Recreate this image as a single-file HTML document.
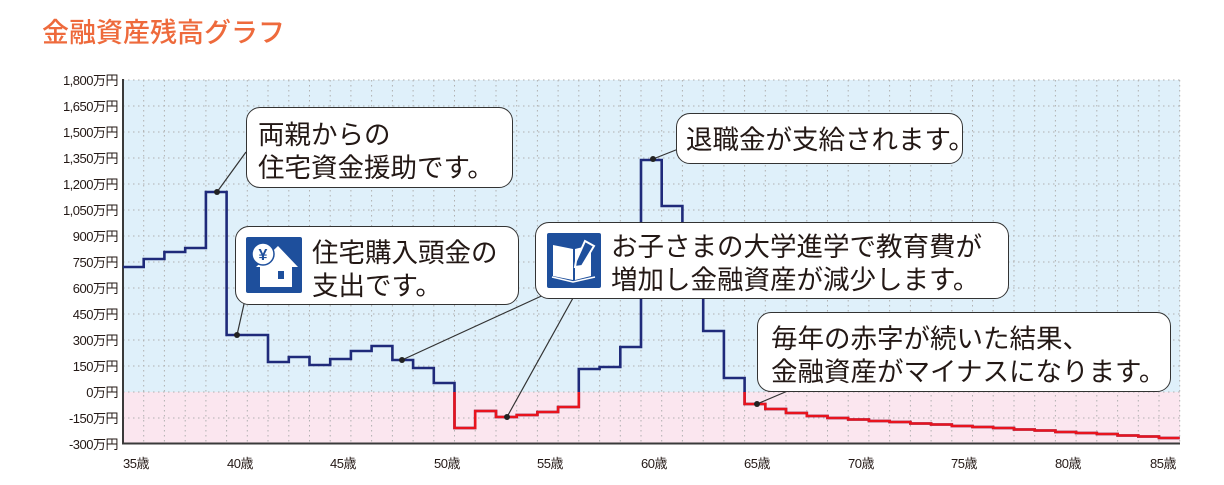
<!DOCTYPE html>
<html><head><meta charset="utf-8">
<style>
body{margin:0;width:1224px;height:485px;background:#fff;position:relative;overflow:hidden;font-family:"Liberation Sans","Noto Sans CJK JP",sans-serif;}
.t{position:absolute;left:42px;top:11px;font-size:27px;font-weight:500;color:#ee6a3c;font-family:"Noto Sans CJK JP",sans-serif;}
.b{position:absolute;background:#fff;border:1.5px solid #333;border-radius:14px;box-sizing:border-box;font-family:"Noto Sans CJK JP",sans-serif;font-size:26.5px;line-height:33px;color:#231815;white-space:nowrap;}
svg{position:absolute;left:0;top:0}
</style></head><body>
<div class="t">金融資産残高グラフ</div>
<svg width="1224" height="485" viewBox="0 0 1224 485">
<defs><clipPath id="neg"><rect x="0" y="392" width="1224" height="100"/></clipPath>
<path id="p" d="M123,267 H143.7 V259 H164.4 V252 H185.2 V248 H205.9 V192 H226.6 V335 H268 V362 H288.8 V357 H309.5 V365 H330.2 V359 H350.9 V351 H371.6 V346 H392.4 V360 H413.1 V368 H433.8 V383 H454.5 V428 H475.2 V411 H496 V417 H516.7 V415 H537.4 V412 H558.1 V407 H578.8 V369 H599.6 V367 H620.3 V347 H641 V160 H661.7 V206 H682.4 V260 H703.2 V331 H723.9 V378 H744.6 V404 H765.3 V409 H786 V413 H806.8 V416 H827.5 V418 H848.2 V419.5 H868.9 V421 H889.6 V422 H910.4 V423.5 H931.1 V424.5 H951.8 V426 H972.5 V427 H993.2 V428 H1014 V429.5 H1034.7 V430.5 H1055.4 V432 H1076.1 V433 H1096.8 V434 H1117.6 V435.5 H1138.3 V436.5 H1159 V438 H1179.7" fill="none" stroke-width="2.6"/>
</defs>
<rect x="123" y="80" width="1057" height="312" fill="#dff0fa"/>
<rect x="123" y="392" width="1057" height="51" fill="#fbe6ef"/>
<g stroke="#b0b0b0" stroke-width="1" stroke-dasharray="1.5 3.5">
<path d="M123 80H1180M123 106H1180M123 132H1180M123 158H1180M123 184H1180M123 210H1180M123 236H1180M123 262H1180M123 288H1180M123 314H1180M123 340H1180M123 366H1180M123 392H1180M123 418H1180"/>
<path d="M143.7 80V443M164.4 80V443M185.2 80V443M205.9 80V443M226.6 80V443M247.3 80V443M268 80V443M288.8 80V443M309.5 80V443M330.2 80V443M350.9 80V443M371.6 80V443M392.4 80V443M413.1 80V443M433.8 80V443M454.5 80V443M475.2 80V443M496 80V443M516.7 80V443M537.4 80V443M558.1 80V443M578.8 80V443M599.6 80V443M620.3 80V443M641 80V443M661.7 80V443M682.4 80V443M703.2 80V443M723.9 80V443M744.6 80V443M765.3 80V443M786 80V443M806.8 80V443M827.5 80V443M848.2 80V443M868.9 80V443M889.6 80V443M910.4 80V443M931.1 80V443M951.8 80V443M972.5 80V443M993.2 80V443M1014 80V443M1034.7 80V443M1055.4 80V443M1076.1 80V443M1096.8 80V443M1117.6 80V443M1138.3 80V443M1159 80V443M1179.7 80V443"/>
</g>
<path d="M123 79V443.5H1180" fill="none" stroke="#3a3a3a" stroke-width="2"/>
<use href="#p" stroke="#1f2a7a"/>
<g clip-path="url(#neg)"><use href="#p" stroke="#e8141e"/></g>
<g stroke="#333" stroke-width="1.2">
<path d="M217 192L246 152M237 335L244 304M402 360L548 293M507 417L573 298M653 159L686 146M757 404L790 390"/>
</g>
<g fill="#222"><circle cx="217" cy="192" r="3"/><circle cx="237" cy="335" r="3"/><circle cx="402" cy="360" r="3"/><circle cx="507" cy="417" r="3"/><circle cx="653" cy="159" r="3"/><circle cx="757" cy="404" r="3"/></g>
<g font-size="13" fill="#231815" text-anchor="end" font-family="Liberation Sans,Noto Sans CJK JP,sans-serif" letter-spacing="-0.5">
<text x="118" y="85">1,800万円</text><text x="118" y="111">1,650万円</text><text x="118" y="137">1,500万円</text><text x="118" y="163">1,350万円</text><text x="118" y="189">1,200万円</text><text x="118" y="215">1,050万円</text><text x="118" y="241">900万円</text><text x="118" y="267">750万円</text><text x="118" y="293">600万円</text><text x="118" y="319">450万円</text><text x="118" y="345">300万円</text><text x="118" y="371">150万円</text><text x="118" y="397">0万円</text><text x="118" y="423">-150万円</text><text x="118" y="449">-300万円</text>
</g>
<g font-size="13" fill="#231815" text-anchor="middle" font-family="Liberation Sans,Noto Sans CJK JP,sans-serif" letter-spacing="-0.5">
<text x="136" y="468">35歳</text><text x="240" y="468">40歳</text><text x="343" y="468">45歳</text><text x="447" y="468">50歳</text><text x="550" y="468">55歳</text><text x="654" y="468">60歳</text><text x="757" y="468">65歳</text><text x="861" y="468">70歳</text><text x="964" y="468">75歳</text><text x="1068" y="468">80歳</text><text x="1163" y="468">85歳</text>
</g>
</svg>
<div class="b" style="left:246px;top:107px;width:267px;height:81px;padding:8px 0 0 11px">両親からの<br>住宅資金援助です。</div>
<div class="b" style="left:235px;top:226px;width:284px;height:79px;padding:7px 0 0 76px">住宅購入頭金の<br>支出です。</div>
<div class="b" style="left:535px;top:222px;width:474px;height:77px;padding:5px 0 0 75px">お子さまの大学進学で教育費が<br>増加し金融資産が減少します。</div>
<div class="b" style="left:676px;top:113px;width:287px;height:51px;padding:7px 0 0 9px">退職金が支給されます。</div>
<div class="b" style="left:757px;top:312px;width:414px;height:80px;padding:7px 0 0 13px">毎年の赤字が続いた結果、<br>金融資産がマイナスになります。</div>
<svg style="left:246px;top:237px" width="56" height="56" viewBox="0 0 56 56">
<rect width="56" height="56" rx="2" fill="#1e4f9c"/>
<path d="M10 30L32 9L52 30H46V50H14V30Z" fill="#fff"/>
<rect x="32" y="34" width="6" height="8" fill="#1e4f9c"/>
<circle cx="17" cy="17" r="11" fill="#fff" stroke="#1e4f9c" stroke-width="1.5"/>
<text x="17" y="23" font-size="16" font-weight="bold" fill="#1e4f9c" text-anchor="middle" font-family="Liberation Sans,sans-serif">¥</text>
</svg>
<svg style="left:547px;top:233px" width="54" height="55" viewBox="0 0 54 55">
<rect width="54" height="55" rx="2" fill="#1e4f9c"/>
<path d="M6 12L26 16V47L6 43Z" fill="#fff"/>
<path d="M28 16L44 12V43L28 47Z" fill="#fff"/>
<path d="M5 44L26 49L48 44" fill="none" stroke="#fff" stroke-width="1.5"/>
<path d="M38 8L47 13L35 33L28 34L29 28Z" fill="#1e4f9c" stroke="#fff" stroke-width="2"/>
</svg>
</body></html>
